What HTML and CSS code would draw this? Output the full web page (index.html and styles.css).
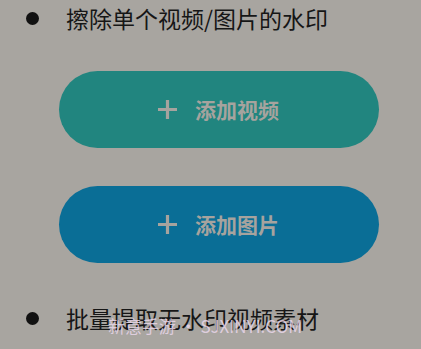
FILE: index.html
```html
<!DOCTYPE html>
<html lang="zh">
<head>
<meta charset="utf-8">
<link rel="stylesheet" href="styles.css">
</head>
<body>
<div class="page">
  <div class="item">
    <span class="dot"></span>
    <span class="label">擦除单个视频/图片的水印</span>
  </div>
  <div class="buttons">
    <div class="btn btn-video">
      <svg class="plus" width="21" height="21" viewBox="0 0 21 21"><path d="M10.5 1V20M1 10.5H20" stroke="currentColor" stroke-width="3.2" fill="none"/></svg>
      <span class="btn-text">添加视频</span>
    </div>
    <div class="btn btn-image">
      <svg class="plus" width="21" height="21" viewBox="0 0 21 21"><path d="M10.5 1V20M1 10.5H20" stroke="currentColor" stroke-width="3.2" fill="none"/></svg>
      <span class="btn-text">添加图片</span>
    </div>
  </div>
  <div class="item item-last">
    <span class="dot"></span>
    <span class="label">批量提取无水印视频素材</span>
  </div>
  <div class="watermark">新意手游 · SJXINYI.COM</div>
</div>
</body>
</html>
```
FILE: styles.css
```css
html, body {
  margin: 0;
  padding: 0;
  background: #a8a5a0;
}
.page {
  position: relative;
  width: 421px;
  height: 349px;
  overflow: hidden;
  display: flex;
  flex-direction: column;
  font-family: "Noto Sans CJK SC", "Noto Sans", sans-serif;
}
.item {
  height: 36px;
  display: flex;
  align-items: center;
  padding-left: 26px;
  gap: 27px;
}
.dot {
  width: 13px;
  height: 13px;
  border-radius: 50%;
  background: #111;
  flex: none;
}
.label {
  font-size: 23px;
  color: #161616;
  line-height: 1;
  white-space: nowrap;
}
.buttons {
  margin-top: 35px;
  margin-left: 59px;
  width: 320px;
  display: flex;
  flex-direction: column;
  gap: 38px;
}
.btn {
  height: 77px;
  border-radius: 39px;
  display: flex;
  align-items: center;
  justify-content: center;
  gap: 17px;
  color: #a6a39e;
  padding-right: 2px;
}
.btn-video {
  background: #21857f;
}
.btn-image {
  background: #0a6e96;
}
.plus {
  flex: none;
}
.btn-text {
  font-size: 21px;
  font-weight: 700;
  line-height: 1;
}
.item-last {
  margin-top: 37px;
}
.watermark {
  position: absolute;
  left: 108px;
  top: 315px;
  font-size: 17px;
  line-height: 22px;
  color: rgba(232, 214, 234, 0.85);
  white-space: nowrap;
}
```
